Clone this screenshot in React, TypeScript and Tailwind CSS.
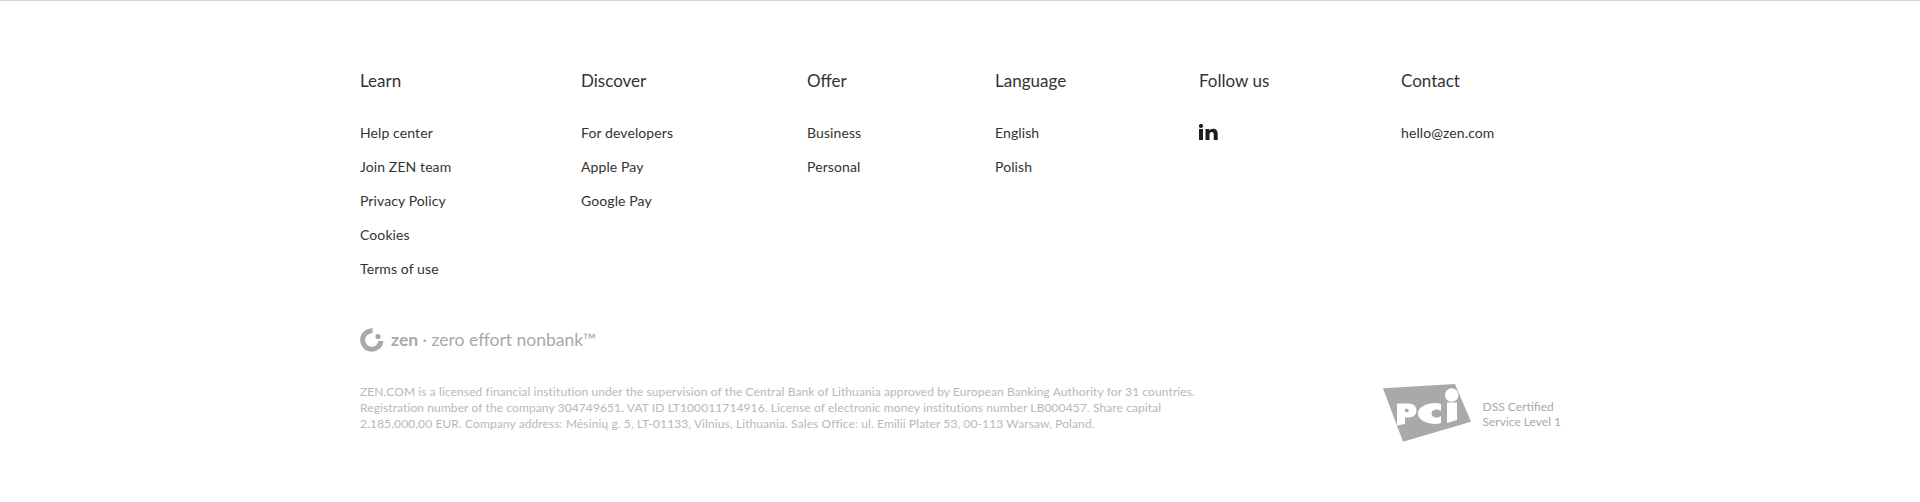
const columns = [
  { title: "Learn", width: "w-[221px]", links: ["Help center", "Join ZEN team", "Privacy Policy", "Cookies", "Terms of use"] },
  { title: "Discover", width: "w-[226px]", links: ["For developers", "Apple Pay", "Google Pay"] },
  { title: "Offer", width: "w-[188px]", links: ["Business", "Personal"] },
  { title: "Language", width: "w-[204px]", links: ["English", "Polish"] },
];

const ZenLogo = () => (
  <svg width="24" height="24" viewBox="0 0 24 24" className="shrink-0">
    <path
      d="M12.500 2.800A9.200 9.200 0 1 0 21 13"
      fill="none"
      stroke="#a9a9a9"
      strokeWidth="5"
    />
    <circle cx="18" cy="8.500" r="2.600" fill="#a9a9a9" />
  </svg>
);

const PciLogo = () => (
  <svg width="89" height="60" viewBox="0 0 89 60" className="shrink-0">
    <path d="M0 4.300 L72 0 L88 37.700 L20 57.700 Z" fill="#a9a9a9" />
    <path
      d="M14 19.500h11c5.500 0 8.500 2.800 8.500 7s-3 7-8.500 7h-3V40l-8 1.500Z M22 24.800v3.400h1.700c1.300 0 2-.7 2-1.700s-.7-1.700-2-1.700Z"
      fill="#fff"
      fillRule="evenodd"
    />
    <path
      d="M58 20c-1.800-.7-3.500-1-5-1-10 0-18 4.300-18 10.500S43 40 53 40c1.500 0 3.200-.3 5-1v-7c-1.300 1-2.800 1.500-4.200 1.500-3 0-5.300-1.600-5.300-4s2.300-4 5.300-4c1.400 0 2.900.5 4.200 1.500Z"
      fill="#fff"
    />
    <path d="M64 18.500h10V36l-10 3Z" fill="#fff" />
    <circle cx="68.700" cy="11" r="6.800" fill="#fff" />
  </svg>
);

export default function App() {
  return (
    <footer className="h-[502px] bg-white border-t border-[#c5d5e4] font-['Lato','Open_Sans',sans-serif] text-[#333333]">
      <div className="pl-[360px] pr-[359px] pt-[69px]">
        <div className="flex h-[257px]">
          {columns.map((col) => (
            <div key={col.title} className={col.width}>
              <h4 className="text-[17px] leading-[22px]">{col.title}</h4>
              <ul className="mt-[30px] flex flex-col gap-[12px] text-[14px] leading-[22px] tracking-[0.1px]">
                {col.links.map((link) => (
                  <li key={link}>{link}</li>
                ))}
              </ul>
            </div>
          ))}
          <div className="w-[202px]">
            <h4 className="text-[17px] leading-[22px]">Follow us</h4>
            <div className="mt-[29px] h-[22px] flex items-center">
              <svg width="19" height="16" viewBox="0 0 19 16" fill="#1e1e1e">
                <rect x="0" y="5" width="4" height="11" />
                <circle cx="2" cy="2" r="2.100" />
                <path d="M6.500 5h3.800v1.600C11 5.500 12.300 4.700 14 4.700c3.400 0 4.700 2 4.700 5.300v6h-4v-5.400c0-1.500-.5-2.600-1.900-2.600s-2.300 1-2.300 2.600V16h-4Z" />
              </svg>
            </div>
          </div>
          <div>
            <h4 className="text-[17px] leading-[22px]">Contact</h4>
            <div className="mt-[30px] text-[14px] leading-[22px] tracking-[0.1px]">hello@zen.com</div>
          </div>
        </div>
        <div className="flex items-center gap-[7px] h-[26px] text-[#a9a9a9] text-[17.500px]">
          <ZenLogo />
          <span><span className="font-bold">zen</span> · zero effort nonbank™</span>
        </div>
        <div className="mt-[31px] flex justify-between items-start">
          <p className="w-[870px] text-[12px] leading-[16px] tracking-[0.1px] text-[#b8b8b8]">
            ZEN.COM is a licensed financial institution under the supervision of the Central Bank of Lithuania approved by European Banking Authority for 31 countries. Registration number of the company 304749651. VAT ID LT100011714916. License of electronic money institutions number LB000457. Share capital 2.185.000,00 EUR. Company address: Mėsinių g. 5, LT-01133, Vilnius, Lithuania. Sales Office: ul. Emilii Plater 53, 00-113 Warsaw, Poland.
          </p>
          <div className="flex items-center gap-[11px]">
            <PciLogo />
            <div className="text-[12px] leading-[15px] text-[#a9a9a9]">
              DSS Certified
              <br />
              Service Level 1
            </div>
          </div>
        </div>
      </div>
    </footer>
  );
}
